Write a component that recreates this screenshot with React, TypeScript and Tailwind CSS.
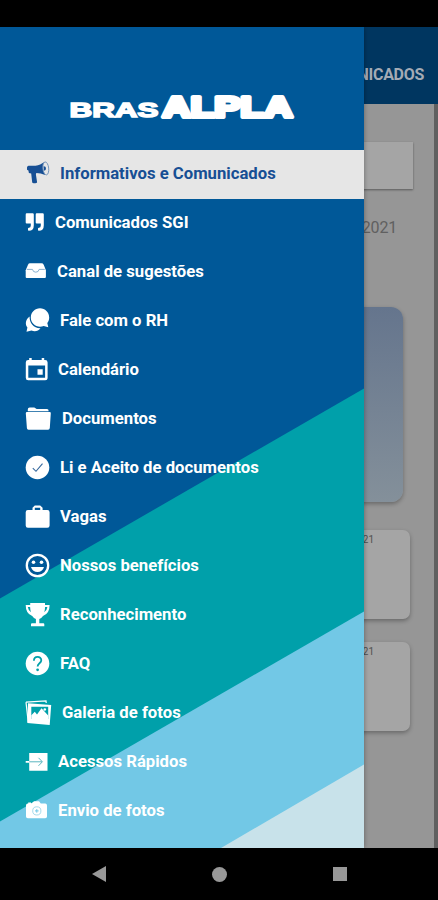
import React from 'react';

const menuItems = [
  { label: 'Informativos e Comunicados', icon: 'megaphone', active: true },
  { label: 'Comunicados SGI', icon: 'quote' },
  { label: 'Canal de sugestões', icon: 'inbox' },
  { label: 'Fale com o RH', icon: 'chat' },
  { label: 'Calendário', icon: 'calendar' },
  { label: 'Documentos', icon: 'folder' },
  { label: 'Li e Aceito de documentos', icon: 'check' },
  { label: 'Vagas', icon: 'briefcase' },
  { label: 'Nossos benefícios', icon: 'smile' },
  { label: 'Reconhecimento', icon: 'trophy' },
  { label: 'FAQ', icon: 'help' },
  { label: 'Galeria de fotos', icon: 'gallery' },
  { label: 'Acessos Rápidos', icon: 'enter' },
  { label: 'Envio de fotos', icon: 'camera' },
];

const icons = {
  megaphone: {
    width: 24,
    shape: (
      <>
        <path d="M2 6.500C2 5.200 3 4.700 4.400 4.700H10.500C14 4.500 16.500 2.600 19.500 0.900C17.700 4.500 17.900 10.300 20.300 14C17 12.800 14.500 12 11.300 12L10.900 13.500L12.100 21.200C12.100 22.500 7.600 22.800 7.200 21.600L6.200 12.400L3.900 11.900L3.400 9.500L2 8.700Z" />
        <ellipse cx="20.800" cy="7.400" rx="2.900" ry="6.500" fill="#e6e6e6" stroke="#6d8fb8" strokeWidth="0.900" transform="rotate(-6 20.800 7.400)" />
        <path d="M18.600 5.300c1.700 0 2.300 .8 2.300 2.100s-.6 2.100-2 2.100z" />
      </>
    ),
  },
  quote: {
    width: 19,
    shape: (
      <>
        <path d="M1.700 3.200H7.700Q8.800 3.200 8.800 4.400V15.200Q8.800 20.800 3.800 20.800Q3 20.800 3 20V18.600Q3 17.800 4 17.800Q5.800 17.800 5.800 15.500V13.500H1.700Q.7 13.500.7 12.500V4.400Q.7 3.200 1.700 3.200Z" />
        <path d="M11.700 3.200H17.700Q18.800 3.200 18.800 4.400V15.200Q18.800 20.800 13.800 20.800Q13 20.800 13 20V18.600Q13 17.800 14 17.800Q15.800 17.800 15.800 15.500V13.500H11.700Q10.700 13.500 10.700 12.500V4.400Q10.700 3.200 11.700 3.200Z" />
      </>
    ),
  },
  inbox: {
    width: 21,
    shape: (
      <>
        <path d="M5 4.300H16.500Q18 4.300 18.700 5.700L20.900 11.200V18Q20.900 19 19.900 19H1.700Q.7 19 .7 18V11.200L3 5.700Q3.600 4.300 5 4.300Z" />
        <path d="M1.800 10.400H7.500Q8 13.200 10.800 13.200T14.100 10.400H19.800" fill="none" stroke="#7fa9cb" strokeWidth="0.900" />
      </>
    ),
  },
  chat: {
    width: 24,
    shape: (
      <>
        <path d="M4.600 8.500C.4 11.500-.1 16.500 2.400 19.600L1.500 23.800L6.500 22.600C10 24 13.500 23 15.500 20.200C9 20.500 4.200 15 4.600 8.500Z" />
        <path d="M15 .3C20 .3 24.200 4.300 24.200 9.500C24.200 12 23.300 13.600 22.300 15L23.300 19.300L18.700 18C12.400 20.600 5.800 16 5.800 9.500C5.800 4.300 10 .3 15 .3Z" />
      </>
    ),
  },
  calendar: {
    width: 22,
    shape: (
      <path fillRule="evenodd" d="M4.200 1H6.700V3H16.700V1H19.200V3H20.100Q22.600 3 22.600 5.400V20.700Q22.600 23.200 20.100 23.200H3.200Q.8 23.200.8 20.700V5.400Q.8 3 3.200 3H4.200ZM3.300 8.500V20.700H20.100V8.500ZM12.500 12.200H17.700V17.700H12.500Z" />
    ),
  },
  folder: {
    width: 26,
    shape: (
      <>
        <path d="M2.800 5.300V3.500Q2.800 1.500 4.700 1.500H9.300L11.700 3H22Q23.600 3 23.700 5.300Z" />
        <path d="M2 6H24.700Q25.900 6 25.800 7.200L24.800 22Q24.600 23.700 23.100 23.700H3.500Q2 23.700 1.900 22L.8 7.200Q.8 6 2 6Z" />
      </>
    ),
  },
  check: {
    width: 24,
    shape: (
      <>
        <circle cx="12.500" cy="12.500" r="11.800" />
        <path d="M7.800 13.200L11 16.300L17.500 8.700" fill="none" stroke="#35689d" strokeWidth="1.100" />
      </>
    ),
  },
  briefcase: {
    width: 24,
    shape: (
      <path fillRule="evenodd" d="M9.800 1.400H15.200L17.600 3.700V6H22.400Q24.600 6 24.600 8.200V21.500Q24.600 23.700 22.400 23.700H2.900Q.7 23.700.7 21.500V8.200Q.7 6 2.900 6H7.500V3.700ZM9.800 3.700V6H15.200V3.700Z" />
    ),
  },
  smile: {
    width: 24,
    shape: (
      <>
        <circle cx="12.500" cy="12.500" r="10.700" fill="none" stroke="currentColor" strokeWidth="2.300" />
        <circle cx="8.500" cy="9.200" r="1.800" />
        <circle cx="16.500" cy="9.200" r="1.800" />
        <path d="M6 14H19C18 17.300 15.600 19 12.500 19S7 17.300 6 14Z" />
      </>
    ),
  },
  trophy: {
    width: 24,
    shape: (
      <path fillRule="evenodd" d="M5.200.9H20V3H24.600Q24.600 11.800 18 13.900Q16.300 16.300 14.300 16.900V21.300H18.300Q19.300 21.300 19.300 22.300V24.300H6V22.300Q6 21.300 7 21.300H10.900V16.900Q8.900 16.300 7.200 13.900Q.7 11.800.7 3H5.200ZM2.800 5Q3.400 8.800 6 10.300Q5.200 8 5.100 5ZM20.100 5Q20 8 19.200 10.300Q21.800 8.800 22.400 5Z" />
    ),
  },
  help: {
    width: 24,
    shape: (
      <>
        <circle cx="12.500" cy="12.500" r="11.800" />
        <path d="M8.900 9.700C8.900 4.700 16.300 4.800 16.300 9.300C16.300 12.400 12.600 12.200 12.600 15.500" fill="none" stroke="#00a0aa" strokeWidth="1.800" />
        <circle cx="12.600" cy="18.800" r="1.400" fill="#00a0aa" />
      </>
    ),
  },
  gallery: {
    width: 26,
    shape: (
      <>
        <path d="M1 2.100L21 .8L21.200 3M1 2.100L3.200 22" fill="none" stroke="currentColor" strokeWidth="1.200" />
        <path fillRule="evenodd" d="M3 3.300L26.200 5L24.700 25L2.300 23.100ZM6.300 6.700V19H23.200V6.700Z" />
        <path d="M6.300 19V15.300L9.800 11.800L12 14.500L16.500 8.300L23.200 15.500V19Z" />
        <circle cx="19.800" cy="9.500" r="1.300" />
      </>
    ),
  },
  enter: {
    width: 22,
    shape: (
      <>
        <path d="M4.200 3.900H22.500V21.700H4.200V13.700H.7V11.900H4.200Z" />
        <path d="M4.200 12.800H17M13.500 8.800L17.400 12.800L13.500 16.800" fill="none" stroke="#5ab5bf" strokeWidth="1" />
      </>
    ),
  },
  camera: {
    width: 22,
    shape: (
      <>
        <path d="M7.500 4.400L9 3.200H14L15.800 5.600H20.200Q22 5.600 22 7.400V18.500Q22 20.300 20.200 20.300H2.800Q1 20.300 1 18.500V7.400Q1 5.600 2.800 5.600H3.200V4.400H6V5.600Z" />
        <circle cx="11.800" cy="12.900" r="4.100" fill="none" stroke="#a6dbec" strokeWidth="1" />
        <path d="M10 12.900H13.600M11.800 11.100V14.700" stroke="#72c8e6" strokeWidth="1" />
      </>
    ),
  },
};

const MenuIcon = ({ name }) => {
  const { width, shape } = icons[name];
  return (
    <svg width={width} height="27" viewBox={`0 0 ${width} 27`} fill="currentColor" className="shrink-0 overflow-visible">
      {shape}
    </svg>
  );
};

const Logo = () => (
  <svg width="226" height="30" viewBox="0 0 226 30" fill="#fff" stroke="#fff" className="overflow-visible font-['Liberation_Sans',Arial,sans-serif] font-bold">
    <text x="0.500" y="26.400" fontSize="20.500" strokeWidth="1.500" textLength="89" lengthAdjust="spacingAndGlyphs">BRAS</text>
    <text x="93.500" y="26.200" fontSize="29.500" strokeWidth="4.200" strokeLinejoin="round" textLength="130" lengthAdjust="spacingAndGlyphs">ALPLA</text>
  </svg>
);

const Drawer = () => (
  <aside className="absolute left-0 top-0 w-[364px] h-full bg-[#005898] shadow-[0_0_5px_rgba(0,0,0,0.35)] overflow-hidden">
    <svg width="364" height="821" viewBox="0 0 364 821" className="absolute inset-0">
      <path d="M0 571.500L364 361.500V821H0Z" fill="#00a0aa" />
      <path d="M0 794.500L364 584.500V821H0Z" fill="#72c8e6" />
      <path d="M221 821L364 737.500V821Z" fill="#c8e2ea" />
    </svg>
    <div className="relative">
      <div className="h-[123px] pt-[64px] pl-[69px]">
        <Logo />
      </div>
      <nav>
        {menuItems.map((item, index) => (
          <a
            key={index}
            className={`flex items-center gap-[11px] h-[49px] pl-[25px] ${item.active ? 'bg-[#e6e6e6] text-[#174f94]' : 'text-white'}`}
          >
            <MenuIcon name={item.icon} />
            <span className="relative -top-px text-[16.7px] leading-6 font-bold whitespace-nowrap">{item.label}</span>
          </a>
        ))}
      </nav>
    </div>
  </aside>
);

const NewsPage = () => (
  <div className="flex flex-col h-full bg-[#969696]">
    <header className="h-[77px] shrink-0 bg-[#003660] flex justify-end items-center pt-[19px] pr-[14px] text-[16px] tracking-[-0.3px] font-bold text-[#a4abb5] whitespace-nowrap">
      COMUNICADOS
    </header>
    <div className="flex-1 border-r-4 border-[#606060] pt-[38px] flex flex-col items-end">
      <div className="w-[386px] h-[47px] mr-[21px] bg-[#a5a5a5] shadow-[0_1px_2px_rgba(0,0,0,0.4)]" />
      <p className="mt-[27px] mr-[37px] text-[16px] leading-6 tracking-[-0.2px] text-[#606060]">2021</p>
      <div className="mt-[67px] mr-[31px] w-[370px] h-[195px] rounded-[12px] bg-linear-to-b from-[#65758d] to-[#84909a] shadow-[0_2px_4px_rgba(0,0,0,0.3)]" />
      <div className="mt-[28px] mr-[24px] w-[384px] h-[89px] rounded-[7px] bg-[#a5a5a5] pt-1 pr-[36px] text-right text-[10px] leading-3 text-[#505050] shadow-[0_2px_4px_rgba(0,0,0,0.3)]">2021</div>
      <div className="mt-[23px] mr-[24px] w-[384px] h-[89px] rounded-[7px] bg-[#a5a5a5] pt-1 pr-[36px] text-right text-[10px] leading-3 text-[#505050] shadow-[0_2px_4px_rgba(0,0,0,0.3)]">2021</div>
    </div>
  </div>
);

const App = () => {
  return (
    <div className="w-[438px] h-[900px] flex flex-col bg-black overflow-hidden font-[Roboto,sans-serif]">
      <div className="h-[27px] shrink-0" />
      <main className="relative h-[821px] shrink-0 overflow-hidden">
        <NewsPage />
        <Drawer />
      </main>
      <footer className="h-[52px] flex items-center justify-between pl-[92px] pr-[91px] text-[#989898]">
        <svg width="14" height="16" viewBox="0 0 14 16" fill="currentColor">
          <path d="M0 8L14 0V16Z" />
        </svg>
        <div className="size-[15px] rounded-full bg-[#989898]" />
        <div className="size-[14px] bg-[#989898]" />
      </footer>
    </div>
  );
};

export default App;
